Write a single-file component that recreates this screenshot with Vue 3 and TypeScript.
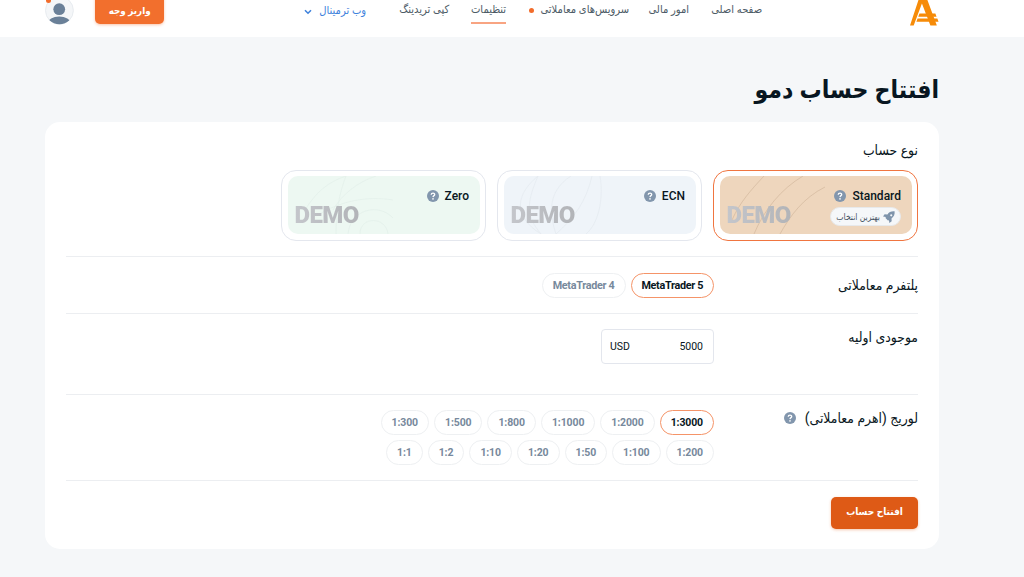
<script setup lang="ts">
interface NavItem { label: string; width: number; active?: boolean; dot?: boolean }

const nav: NavItem[] = [
  { label: 'صفحه اصلی', width: 51 },
  { label: 'امور مالی', width: 38 },
  { label: 'سرویس‌های معاملاتی', width: 90, dot: true },
  { label: 'تنظیمات', width: 35, active: true },
  { label: 'کپی تریدینگ', width: 52 },
]

interface Account { name: string; tone: string; lines: string[]; best?: boolean }

const accounts: Account[] = [
  {
    name: 'Standard',
    tone: 'sand',
    best: true,
    lines: ['M12 44C20 26 31 14 44 0', 'M34 58C44 34 61 13 83 0', 'M60 58C70 40 83 22 105 11'],
  },
  {
    name: 'ECN',
    tone: 'sky',
    lines: ['M34 0C12 18 8 40 37 58', 'M34 0C22 28 22 40 37 58', 'M67 0C42 16 46 40 52 58', 'M88 0C82 26 70 42 52 58', 'M96 0C100 24 94 48 82 58'],
  },
  {
    name: 'Zero',
    tone: 'mint',
    lines: ['M17 34C28 16 40 6 58 0', 'M48 58C48 36 51 18 58 0', 'M45 34C54 18 70 6 88 0', 'M28 40C54 24 80 20 105 24', 'M60 58C62 34 90 26 105 42', 'M72 58C72 40 98 40 100 58'],
  },
]

const platforms = ['MetaTrader 5', 'MetaTrader 4']
const leverages = [
  ['1:3000', '1:2000', '1:1000', '1:800', '1:500', '1:300'],
  ['1:200', '1:100', '1:50', '1:20', '1:10', '1:2', '1:1'],
]
</script>

<template>
  <div class="page" dir="rtl">
    <header class="header">
      <svg class="logo" viewBox="0 0 29 26">
        <path d="M8.500 0 0 25.500h3.700L12 3.500 20.500 25.500H27L17.500 0z" />
        <path d="M9.500 13.500H25.500l1.200 3.200H8.300zM7.600 18.500H27.500l1.200 3.400H6.400z" />
      </svg>
      <nav class="nav">
        <a v-for="n in nav" :key="n.label" class="nav-item" :class="{ active: n.active }" :style="{ width: n.width + 'px' }">
          {{ n.label }}<i v-if="n.dot" class="nav-dot"></i>
        </a>
      </nav>
      <a class="terminal">
        <span class="terminal-label">وب ترمینال</span>
        <svg class="chevron" viewBox="0 0 8 6"><path d="M1 1.200 4 4.200 7 1.200" /></svg>
      </a>
      <button class="deposit">واریز وجه</button>
      <div class="avatar">
        <svg viewBox="0 0 29 29">
          <defs><clipPath id="avatar-clip"><circle cx="14.500" cy="14.500" r="14" /></clipPath></defs>
          <circle cx="14.500" cy="14.500" r="14" class="avatar-bg" />
          <g clip-path="url(#avatar-clip)" class="avatar-fg">
            <circle cx="14.300" cy="13.300" r="5.900" />
            <ellipse cx="14.300" cy="27" rx="11.500" ry="6.300" />
          </g>
        </svg>
        <i class="avatar-dot"></i>
      </div>
    </header>

    <main class="main">
      <h1 class="title"><span>افتتاح حساب دمو</span></h1>
      <section class="panel">
        <h2 class="label type-label">نوع حساب</h2>
        <div class="accounts">
          <div v-for="(a, i) in accounts" :key="a.name" class="account" :class="{ selected: i === 0 }">
            <div class="account-face" :class="a.tone">
              <svg class="lines" viewBox="0 0 192 58"><path v-for="d in a.lines" :key="d" :d="d" /></svg>
              <div class="account-name">
                <span>{{ a.name }}</span>
                <svg class="help" viewBox="0 0 12 12">
                  <circle cx="6" cy="6" r="6" />
                  <path d="M4.200 4.700C4.300 2.500 7.800 2.600 7.700 4.600 7.600 5.700 6.100 5.600 6 7.100" />
                  <circle class="help-dot" cx="6" cy="8.900" r=".8" />
                </svg>
              </div>
              <div v-if="a.best" class="best">
                <svg class="rocket" viewBox="0 0 12 12">
                  <path d="M11.600.3C8.200 0 6 1.200 4.400 3.400L1.600 3.200 0 5.500l2.800.4-.3 1.200L4.900 9.500 6 9.200 6.300 12 8.700 10.300 8.500 7.500C10.800 5.800 12 3.700 11.600.3ZM7.500 5A1 1 0 1 1 9 3.500 1 1 0 0 1 7.500 5Z" />
                </svg>
                <span>بهترین انتخاب</span>
              </div>
              <div class="demo">DEMO</div>
            </div>
          </div>
        </div>

        <div class="row platform-row">
          <div class="label">پلتفرم معاملاتی</div>
          <div class="pills">
            <button v-for="(p, i) in platforms" :key="p" class="pill platform" :class="{ on: i === 0 }">{{ p }}</button>
          </div>
        </div>

        <div class="row balance-row">
          <div class="label">موجودی اولیه</div>
          <div class="amount"><span>5000</span><span>USD</span></div>
        </div>

        <div class="row leverage-row">
          <div class="label">
            <span>لوریج (اهرم معاملاتی)</span>
            <svg class="help" viewBox="0 0 12 12">
              <circle cx="6" cy="6" r="6" />
              <path d="M4.200 4.700C4.300 2.500 7.800 2.600 7.700 4.600 7.600 5.700 6.100 5.600 6 7.100" />
              <circle class="help-dot" cx="6" cy="8.900" r=".8" />
            </svg>
          </div>
          <div class="leverages">
            <div v-for="(line, r) in leverages" :key="r" class="pills">
              <button v-for="(l, i) in line" :key="l" class="pill" dir="ltr" :class="{ on: r === 0 && i === 0 }">{{ l }}</button>
            </div>
          </div>
        </div>

        <div class="row submit-row">
          <button class="submit">افتتاح حساب</button>
        </div>
      </section>
    </main>
  </div>
</template>

<style>
body { margin: 0; background: #f5f7f9; }
</style>

<style scoped>
* { box-sizing: border-box; }
.page { width: 1024px; height: 577px; overflow: hidden; background: #f5f7f9; color: #081621; font-family: Roboto, "DejaVu Sans Condensed", "DejaVu Sans", sans-serif; }
button { font-family: inherit; margin: 0; cursor: pointer; }
.header { display: flex; align-items: flex-start; height: 37px; padding: 0 85px 0 45px; background: #fff; }
.logo { width: 29px; height: 26px; fill: #f68b08; }
.nav { display: flex; gap: 22px; margin-right: 148px; }
.nav-item { position: relative; height: 24px; padding-top: 1px; font-size: 11.100px; line-height: 17px; color: #4d5b66; white-space: nowrap; }
.nav-item:nth-child(3) { margin-left: 11px; }
.nav-item.active { border-bottom: 2px solid #f8a482; }
.nav-dot { position: absolute; left: -10px; top: 8px; width: 5px; height: 5px; border-radius: 50%; background: #f26c2b; }
.terminal { display: flex; align-items: center; gap: 7px; width: 63px; height: 20px; margin-right: 31px; font-size: 11.100px; color: #3f82dc; white-space: nowrap; }
.terminal-label { width: 47px; }
.chevron { width: 8px; height: 6px; flex: none; margin-top: 3px; fill: none; stroke: #3f82dc; stroke-width: 1.600; }
.deposit { width: 70px; height: 32px; margin-top: -8px; margin-right: 139px; padding: 4px 0 0; border: 0; border-radius: 5px; background: #f26f2d; color: #fff; font-size: 9.800px; font-weight: 700; box-shadow: 0 1px 3px #f26f2d66; }
.avatar { position: relative; width: 29px; height: 29px; margin: -4px 21px 0 0; }
.avatar svg { display: block; }
.avatar-bg { fill: #f4f6f8; stroke: #e7ebef; }
.avatar-fg { fill: #6a8098; }
.avatar-dot { position: absolute; left: 1px; top: 2px; width: 5px; height: 5px; border-radius: 50%; background: #f26c2b; }

.main { width: 894px; margin-right: 85px; }
.title { height: 85px; margin: 0; padding-top: 35px; font-size: 24.600px; line-height: 36px; font-weight: 700; white-space: nowrap; }
.panel { height: 427px; padding: 21px 21px 0; background: #fff; border-radius: 15px; }
.label { display: flex; align-items: center; height: 16px; margin: 0; font-size: 13.850px; font-weight: 400; white-space: nowrap; }
.type-label { height: 14px; }
.accounts { display: flex; gap: 11px; margin-top: 13px; }
.account { width: 205px; height: 71px; padding: 5px; border: 1.500px solid #e4e7ee; border-radius: 15px; }
.account.selected { border-color: #f07540; }
.account-face { position: relative; height: 58px; margin: 0 .5px; padding: 13px 10.500px 0 0; border-radius: 10px; overflow: hidden; }
.sand { background: #eed6bd; color: #d2b89e; }
.sky { background: #eff4f9; color: #e4eaef; }
.mint { background: #edf8f2; color: #e2efe9; }
.lines { position: absolute; inset: 0; width: 192px; height: 58px; fill: none; stroke: currentColor; stroke-width: .7; }
.account-name { position: relative; display: flex; align-items: center; gap: 6px; height: 14px; color: #081621; font-size: 12px; font-weight: 500; }
.help { width: 12px; height: 12px; flex: none; fill: #8296ad; }
.help path { fill: none; stroke: #fff; stroke-width: 1.300; }
.help .help-dot { fill: #fff; }
.best { position: relative; display: flex; align-items: center; gap: 3px; width: 71px; height: 19px; margin-top: 4px; padding: 0 5px 0 0; border: 1px solid #e7e9eb; border-radius: 10px; background: #f5f7f9; color: #465463; font-size: 8.600px; line-height: 14px; white-space: nowrap; }
.rocket { width: 12px; height: 12px; flex: none; fill: #7f94ab; }
.demo { position: absolute; left: 7px; top: 27px; font-size: 24px; line-height: 24px; font-weight: 900; letter-spacing: -.6px; background: linear-gradient(90deg, #c4c6cb, #b2b4b8); -webkit-background-clip: text; background-clip: text; color: transparent; }

.row { display: flex; border-top: 1px solid #eceef1; }
.row > .label { width: 204px; }
.platform-row { height: 57px; margin-top: 15px; padding-top: 16px; }
.platform-row .label { height: 23px; }
.balance-row { height: 81px; padding-top: 15px; }
.leverage-row { height: 86px; padding-top: 15px; }
.leverage-row .label { gap: 9px; }
.pills { display: flex; gap: 5px; }
.pill { height: 25px; padding: 0 10px; border: 1px solid #eef0f2; border-radius: 13px; background: #fff; color: #77899c; font-size: 10.500px; letter-spacing: -.12px; font-weight: 700; white-space: nowrap; }
.pill.on { border-color: #f59468; color: #081621; }
.platform { width: 84px; padding: 0; font-size: 10.800px; letter-spacing: -.3px; }
.platform.on { width: 83.500px; }
.amount { display: flex; justify-content: space-between; align-items: center; width: 113px; height: 35px; padding: 0 10px 0 8px; border: 1px solid #e3e6ed; border-radius: 4px; font-size: 10.500px; }
.leverages { display: grid; gap: 5px; align-content: start; }
.submit { width: 87px; height: 32px; margin-top: 16px; padding: 0 0 3px; border: 0; border-radius: 5px; background: #de5a16; color: #fff; font-size: 10px; font-weight: 700; box-shadow: 0 1px 3px #de5a1655; }
</style>
